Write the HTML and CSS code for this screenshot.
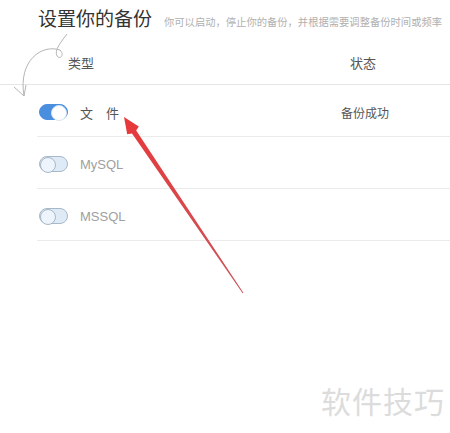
FILE: index.html
```html
<!DOCTYPE html>
<html lang="zh-CN">
<head>
    <meta charset="UTF-8">
    <meta name="viewport" content="width=device-width, initial-scale=1.0">
    <title>设置你的备份</title>
    <link rel="stylesheet" href="styles.css">
</head>
<body>
    <div class="page">
        <div class="header">
            <div class="title">设置你的备份</div>
            <div class="subtitle">你可以启动，停止你的备份，并根据需要调整备份时间或频率</div>
        </div>

        <div class="thead">
            <span class="col-type">类型</span>
            <span class="col-status">状态</span>
        </div>

        <div class="row">
            <span class="switch switch-on"></span>
            <span class="name name-on">文　件</span>
            <span class="status">备份成功</span>
        </div>
        <div class="row">
            <span class="switch"></span>
            <span class="name">MySQL</span>
            <span class="status"></span>
        </div>
        <div class="row">
            <span class="switch"></span>
            <span class="name">MSSQL</span>
            <span class="status"></span>
        </div>

        <svg class="marks" width="450" height="433" viewBox="0 0 450 433">
            <defs>
                <linearGradient id="redGrad" x1="124" y1="117" x2="243" y2="293" gradientUnits="userSpaceOnUse">
                    <stop offset="0" stop-color="#e8383a"/>
                    <stop offset="1" stop-color="#c9565a"/>
                </linearGradient>
            </defs>
            <!-- grey hand-drawn curl -->
            <path d="M67,34 C61,42 54,50 57,56 C60,60 65,55 60,50 C42,44 18,60 24,96" fill="none" stroke="#b5b5b5" stroke-width="1"/>
            <path d="M14,87 L24,96 L26,85" fill="none" stroke="#b5b5b5" stroke-width="1"/>
            <!-- red pointer -->
            <polygon points="124,117 138.8,126.4 136.2,130.6 243.4,292.7 242.6,293.3 132,133.4 127.2,134.2" fill="url(#redGrad)"/>
        </svg>

        <div class="watermark">软件技巧</div>
    </div>
</body>
</html>
```

FILE: styles.css
```css
* {
    margin: 0;
    padding: 0;
    box-sizing: border-box;
}

body {
    font-family: "Liberation Sans", "Noto Sans CJK SC", sans-serif;
    background: #ffffff;
    color: #555;
}

.page {
    position: relative;
    width: 450px;
    height: 433px;
    overflow: hidden;
}

.header {
    display: flex;
    align-items: baseline;
    gap: 12px;
    height: 36px;
    padding: 4px 0 0 38px;
    white-space: nowrap;
}

.title {
    flex-shrink: 0;
    font-size: 19px;
    color: #333;
}

.subtitle {
    font-size: 10.3px;
    color: #b0b0b0;
}

.thead {
    display: grid;
    grid-template-columns: 282px 1fr;
    align-items: center;
    height: 49px;
    padding: 5px 0 0 68px;
    font-size: 13px;
    color: #555;
    border-bottom: 1px solid #e6e6e6;
}

.row {
    display: grid;
    grid-template-columns: 41px 261px 1fr;
    align-items: center;
    height: 52px;
    margin-left: 37px;
    padding: 3px 0 0 2px;
    border-bottom: 1px solid #ebebeb;
}

.switch {
    position: relative;
    display: block;
    width: 29px;
    height: 16px;
    border-radius: 8px;
    border: 1px solid #a7b8c8;
    background: #dfeaf7;
}

.switch::after {
    content: "";
    position: absolute;
    top: 0;
    left: 0;
    width: 14px;
    height: 14px;
    border-radius: 50%;
    border: 1px solid #a7b8c8;
    background: #eef4fb;
}

.switch-on {
    background: #4a8fdf;
    border-color: #4a8fdf;
}

.switch-on::after {
    left: auto;
    right: 0;
    background: #fff;
    border-color: #d8e4f0;
}

.name {
    font-size: 13px;
    color: #a0a0a0;
}

.name-on {
    color: #555;
}

.status {
    font-size: 12px;
    color: #555;
}

.marks {
    position: absolute;
    top: 0;
    left: 0;
    pointer-events: none;
}

.watermark {
    position: absolute;
    left: 321px;
    top: 378px;
    font-family: "Noto Sans CJK SC", sans-serif;
    font-size: 30px;
    color: #dcdcdc;
    letter-spacing: 1px;
}
```
